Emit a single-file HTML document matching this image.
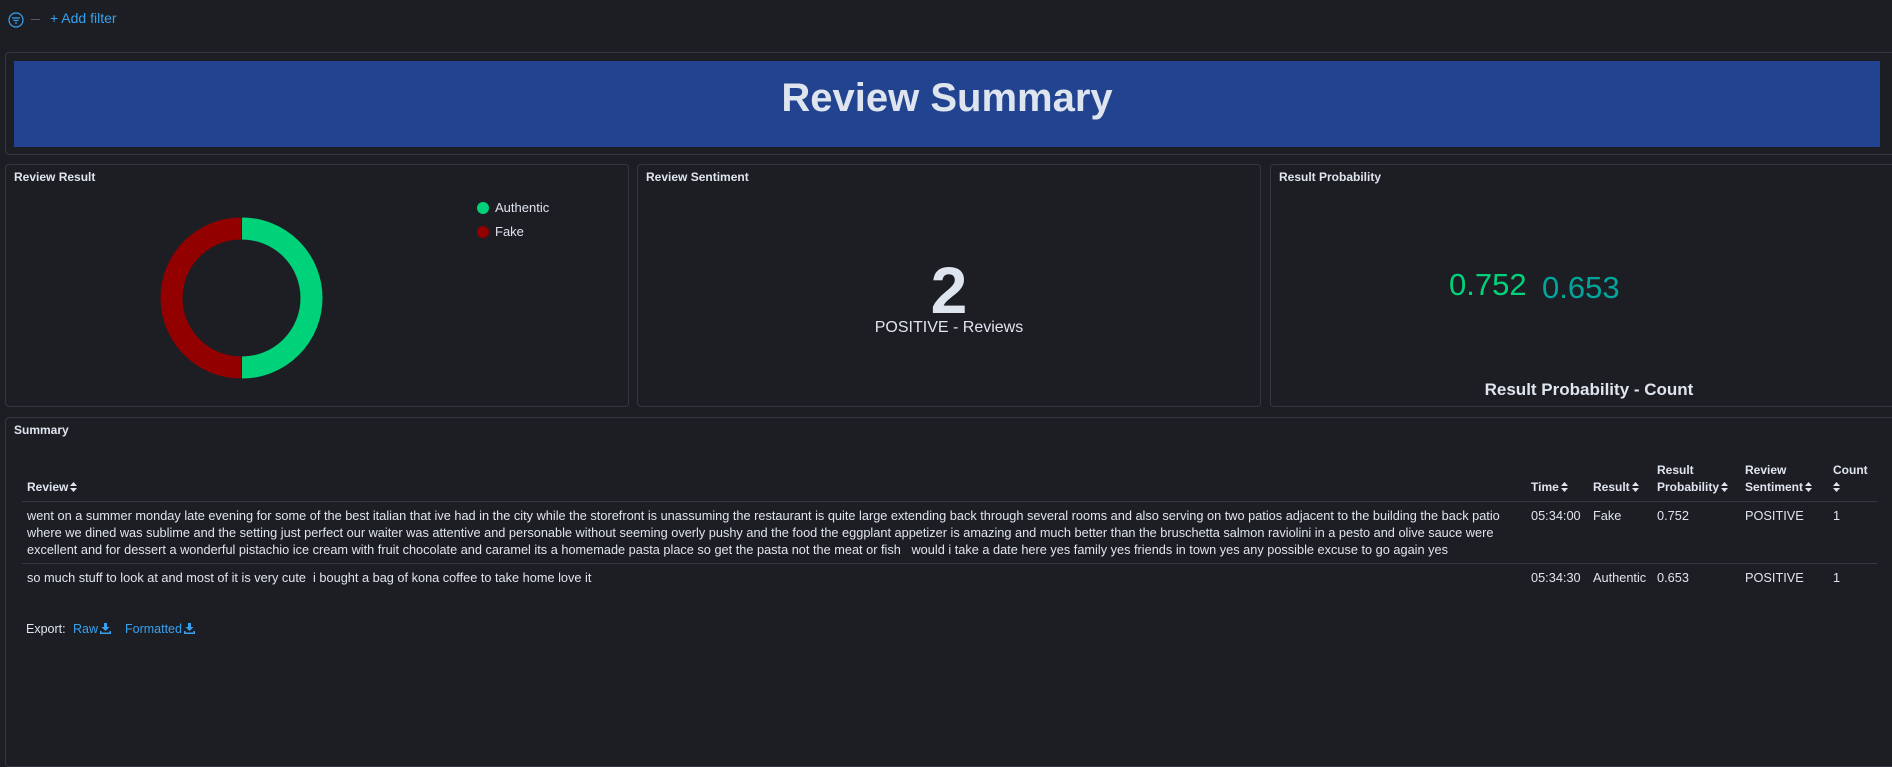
<!DOCTYPE html>
<html><head><meta charset="utf-8"><style>
*{box-sizing:border-box;margin:0;padding:0}
html,body{width:1892px;height:758px;overflow:hidden;background:#1d1e24;font-family:"Liberation Sans",sans-serif;color:#dfe5ef}
.abs{position:absolute}
.panel{position:absolute;border:1px solid #343741;border-radius:4px;background:#1d1e24}
.ptitle{position:absolute;left:8px;top:5px;font-size:12px;font-weight:bold;color:#dfe5ef}
.srt{display:inline-block;width:7px;height:10px;vertical-align:-1px;margin-left:2px}
.h{position:absolute;font-size:12px;font-weight:bold;line-height:17px}
.c{position:absolute;font-size:12.75px;line-height:17px;white-space:nowrap}
.link{color:#36a2ef}
.dl{display:inline-block;width:11px;height:11px;vertical-align:-1px;margin-left:2px}
</style></head><body>
<svg class="abs" style="left:8px;top:12px" width="16" height="16" viewBox="0 0 16 16"><circle cx="8" cy="8" r="7" fill="none" stroke="#36a2ef" stroke-width="1.2"/><path d="M4 6h8M5.5 8.5h5M7 11h2" stroke="#36a2ef" stroke-width="1.2"/></svg>
<div class="abs" style="left:31px;top:19px;width:9px;height:1px;background:#535966"></div>
<div class="abs link" style="left:50px;top:10px;font-size:14px">+ Add filter</div>

<div class="panel" style="left:5px;top:52px;width:1895px;height:103px"></div>
<div class="abs" style="left:14px;top:61px;width:1866px;height:86px;background:#214390"></div>
<div class="abs" style="left:14px;top:76px;width:1866px;text-align:center;font-size:40px;font-weight:bold;color:#dfe5ef">Review Summary</div>

<div class="panel" style="left:5px;top:164px;width:624px;height:243px"><div class="ptitle">Review Result</div></div>
<svg class="abs" style="left:160px;top:216px" width="164" height="164" viewBox="0 0 164 164">
<path d="M82 12.5 A69.5 69.5 0 0 1 82 151.5" fill="none" stroke="#00d27a" stroke-width="22"/>
<path d="M81 151.5 A69.5 69.5 0 0 1 81 12.5" fill="none" stroke="#920000" stroke-width="22"/>
</svg>
<div class="abs" style="left:477px;top:202px;width:12px;height:12px;border-radius:50%;background:#00d27a"></div>
<div class="abs" style="left:495px;top:200px;font-size:13px">Authentic</div>
<div class="abs" style="left:477px;top:226px;width:12px;height:12px;border-radius:50%;background:#920000"></div>
<div class="abs" style="left:495px;top:224px;font-size:13px">Fake</div>

<div class="panel" style="left:637px;top:164px;width:624px;height:243px"><div class="ptitle">Review Sentiment</div></div>
<div class="abs" style="left:637px;top:252px;width:624px;text-align:center;font-size:66px;font-weight:bold;line-height:76px">2</div>
<div class="abs" style="left:637px;top:319px;width:624px;text-align:center;font-size:16px">POSITIVE - Reviews</div>

<div class="panel" style="left:1270px;top:164px;width:630px;height:243px"><div class="ptitle">Result Probability</div></div>
<div class="abs" style="left:1449px;top:267px;font-size:31px;color:#00d27a">0.752</div>
<div class="abs" style="left:1542px;top:270px;font-size:31px;color:#00a69b">0.653</div>
<div class="abs" style="left:1270px;top:380px;width:638px;text-align:center;font-size:17px;font-weight:bold">Result Probability - Count</div>

<div class="panel" style="left:5px;top:417px;width:1895px;height:350px"><div class="ptitle">Summary</div></div>

<svg width="0" height="0" style="position:absolute"><defs><g id="s"><path d="M0 4L3.5 0L7 4Z M0 6L3.5 10L7 6Z" fill="#dfe5ef"/></g></defs></svg>
<div class="h" style="left:27px;top:479px">Review<svg class="srt" viewBox="0 0 7 10"><use href="#s"/></svg></div>
<div class="h" style="left:1531px;top:479px">Time<svg class="srt" viewBox="0 0 7 10"><use href="#s"/></svg></div>
<div class="h" style="left:1593px;top:479px">Result<svg class="srt" viewBox="0 0 7 10"><use href="#s"/></svg></div>
<div class="h" style="left:1657px;top:462px">Result<br>Probability<svg class="srt" viewBox="0 0 7 10"><use href="#s"/></svg></div>
<div class="h" style="left:1745px;top:462px">Review<br>Sentiment<svg class="srt" viewBox="0 0 7 10"><use href="#s"/></svg></div>
<div class="h" style="left:1833px;top:462px">Count<br><svg class="srt" viewBox="0 0 7 10" style="margin-left:0"><use href="#s"/></svg></div>
<div class="abs" style="left:22px;top:501px;width:1855px;height:1px;background:#343741"></div>
<div class="c" style="left:27px;top:507px">went on a summer monday late evening for some of the best italian that ive had in the city while the storefront is unassuming the restaurant is quite large extending back through several rooms and also serving on two patios adjacent to the building the back patio<br>where we dined was sublime and the setting just perfect our waiter was attentive and personable without seeming overly pushy and the food the eggplant appetizer is amazing and much better than the bruschetta salmon raviolini in a pesto and olive sauce were<br>excellent and for dessert a wonderful pistachio ice cream with fruit chocolate and caramel its a homemade pasta place so get the pasta not the meat or fish &nbsp; would i take a date here yes family yes friends in town yes any possible excuse to go again yes</div>
<div class="c" style="left:1531px;top:507px">05:34:00</div>
<div class="c" style="left:1593px;top:507px">Fake</div>
<div class="c" style="left:1657px;top:507px">0.752</div>
<div class="c" style="left:1745px;top:507px">POSITIVE</div>
<div class="c" style="left:1833px;top:507px">1</div>
<div class="abs" style="left:22px;top:563px;width:1855px;height:1px;background:#343741"></div>
<div class="c" style="left:27px;top:569px">so much stuff to look at and most of it is very cute &nbsp;i bought a bag of kona coffee to take home love it</div>
<div class="c" style="left:1531px;top:569px">05:34:30</div>
<div class="c" style="left:1593px;top:569px">Authentic</div>
<div class="c" style="left:1657px;top:569px">0.653</div>
<div class="c" style="left:1745px;top:569px">POSITIVE</div>
<div class="c" style="left:1833px;top:569px">1</div>

<div class="c" style="left:26px;top:621px;font-size:12.5px">Export:</div>
<div class="c link" style="left:73px;top:621px;font-size:12.5px">Raw<svg class="dl" viewBox="0 0 11 11"><path d="M4 0h3v4h2.5L5.5 8 1.5 4H4Z M0 8h1.5v1.5h8V8H11v3H0Z" fill="#36a2ef"/></svg></div>
<div class="c link" style="left:125px;top:621px;font-size:12.5px">Formatted<svg class="dl" viewBox="0 0 11 11"><path d="M4 0h3v4h2.5L5.5 8 1.5 4H4Z M0 8h1.5v1.5h8V8H11v3H0Z" fill="#36a2ef"/></svg></div>
</body></html>
